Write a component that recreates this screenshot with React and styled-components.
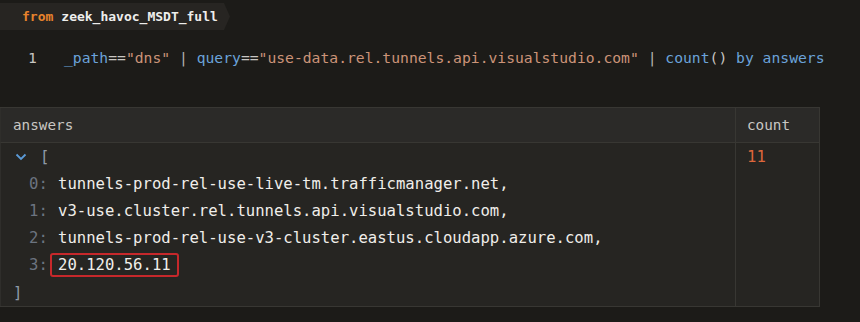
import React from "react";
import styled, { createGlobalStyle } from "styled-components";

const GlobalStyle = createGlobalStyle`
  html, body {
    margin: 0;
    padding: 0;
    background: #1c1b18;
  }
  body {
    font-family: "DejaVu Sans Mono", "Liberation Mono", monospace;
    color: #e8e6e3;
  }
`;

const Page = styled.div`
  width: 860px;
  height: 322px;
  display: flex;
  flex-direction: column;
  background: #1c1b18;
  overflow: hidden;
`;

const FromTab = styled.div`
  align-self: flex-start;
  margin-top: 3px;
  height: 27px;
  width: 230px;
  box-sizing: border-box;
  padding-left: 22px;
  display: flex;
  align-items: center;
  gap: 8px;
  background: #272522;
  clip-path: polygon(0 0, 224px 0, 230px 50%, 224px 100%, 0 100%);
  font-size: 13px;
  font-weight: bold;
`;

const Keyword = styled.span`
  color: #e8832c;
`;

const PoolName = styled.span`
  color: #eeeeec;
`;

const Editor = styled.div`
  display: flex;
  align-items: center;
  height: 52px;
  margin-top: 1px;
  font-size: 14.7px;
`;

const LineNo = styled.span`
  width: 64px;
  box-sizing: border-box;
  padding-left: 28px;
  color: #c8c6c2;
`;

const Tok = styled.span`
  color: ${(p) =>
    p.$kind === "ident"
      ? "#6ba3da"
      : p.$kind === "str"
      ? "#cc9478"
      : p.$kind === "pipe"
      ? "#b5b3ae"
      : "#c8c6c2"};
`;

const Table = styled.div`
  margin-top: 24px;
  width: 820px;
  box-sizing: border-box;
  display: grid;
  grid-template-columns: 735px 1fr;
  border: 1px solid #383733;
  border-left: none;
  background: #262522;
`;

const HeadCell = styled.div`
  height: 35px;
  box-sizing: border-box;
  display: flex;
  align-items: center;
  padding-left: ${(p) => (p.$first ? "12px" : "11px")};
  background: #2b2a28;
  border-bottom: 1px solid #383733;
  border-left: ${(p) => (p.$first ? "1px solid #2f2e2b" : "1px solid #383733")};
  color: #c9c7c3;
  font-size: 14.3px;
`;

const BodyCell = styled.div`
  height: 163px;
  box-sizing: border-box;
  border-left: ${(p) => (p.$first ? "1px solid #2f2e2b" : "1px solid #383733")};
  padding-left: ${(p) => (p.$first ? "0" : "11px")};
  font-size: 15.6px;
`;

const Row = styled.div`
  height: 27.2px;
  display: flex;
  align-items: center;
  white-space: pre;
`;

const Toggle = styled.svg`
  width: 12px;
  height: 8px;
  margin-left: 14px;
  margin-right: 13px;
`;

const Bracket = styled.span`
  color: #8e9aa8;
  margin-left: ${(p) => p.$indent || 0};
`;

const Index = styled.span`
  color: #6c7480;
  width: 57px;
  box-sizing: border-box;
  padding-left: 28px;
`;

const Value = styled.span`
  color: #f0eeea;
`;

const Highlight = styled.span`
  color: #f0eeea;
  border: 2px solid #c6282b;
  border-radius: 3px;
  padding: 1px 6px 1px 6px;
  margin-left: -8px;
  line-height: 18px;
`;

const Count = styled.span`
  color: #dd673c;
`;

const answers = [
  "tunnels-prod-rel-use-live-tm.trafficmanager.net,",
  "v3-use.cluster.rel.tunnels.api.visualstudio.com,",
  "tunnels-prod-rel-use-v3-cluster.eastus.cloudapp.azure.com,",
  "20.120.56.11",
];

export default function App() {
  return (
    <>
      <GlobalStyle />
      <Page>
        <FromTab>
          <Keyword>from</Keyword>
          <PoolName>zeek_havoc_MSDT_full</PoolName>
        </FromTab>
        <Editor>
          <LineNo>1</LineNo>
          <span>
            <Tok $kind="ident">_path</Tok>
            <Tok>==</Tok>
            <Tok $kind="str">"dns"</Tok>
            <Tok $kind="pipe"> | </Tok>
            <Tok $kind="ident">query</Tok>
            <Tok>==</Tok>
            <Tok $kind="str">"use-data.rel.tunnels.api.visualstudio.com"</Tok>
            <Tok $kind="pipe"> | </Tok>
            <Tok $kind="ident">count</Tok>
            <Tok>()</Tok>
            <Tok> </Tok>
            <Tok $kind="ident">by</Tok>
            <Tok> </Tok>
            <Tok $kind="ident">answers</Tok>
          </span>
        </Editor>
        <Table>
          <HeadCell $first>answers</HeadCell>
          <HeadCell>count</HeadCell>
          <BodyCell $first>
            <Row>
              <Toggle viewBox="0 0 12 8">
                <path
                  d="M1.5 1.5 L6 6 L10.5 1.5"
                  fill="none"
                  stroke="#5b9bd8"
                  strokeWidth="1.8"
                />
              </Toggle>
              <Bracket>[</Bracket>
            </Row>
            {answers.map((a, i) => (
              <Row key={a}>
                <Index>{i}:</Index>
                {i === answers.length - 1 ? (
                  <Highlight>{a}</Highlight>
                ) : (
                  <Value>{a}</Value>
                )}
              </Row>
            ))}
            <Row>
              <Bracket $indent="12px">]</Bracket>
            </Row>
          </BodyCell>
          <BodyCell>
            <Row>
              <Count>11</Count>
            </Row>
          </BodyCell>
        </Table>
      </Page>
    </>
  );
}
